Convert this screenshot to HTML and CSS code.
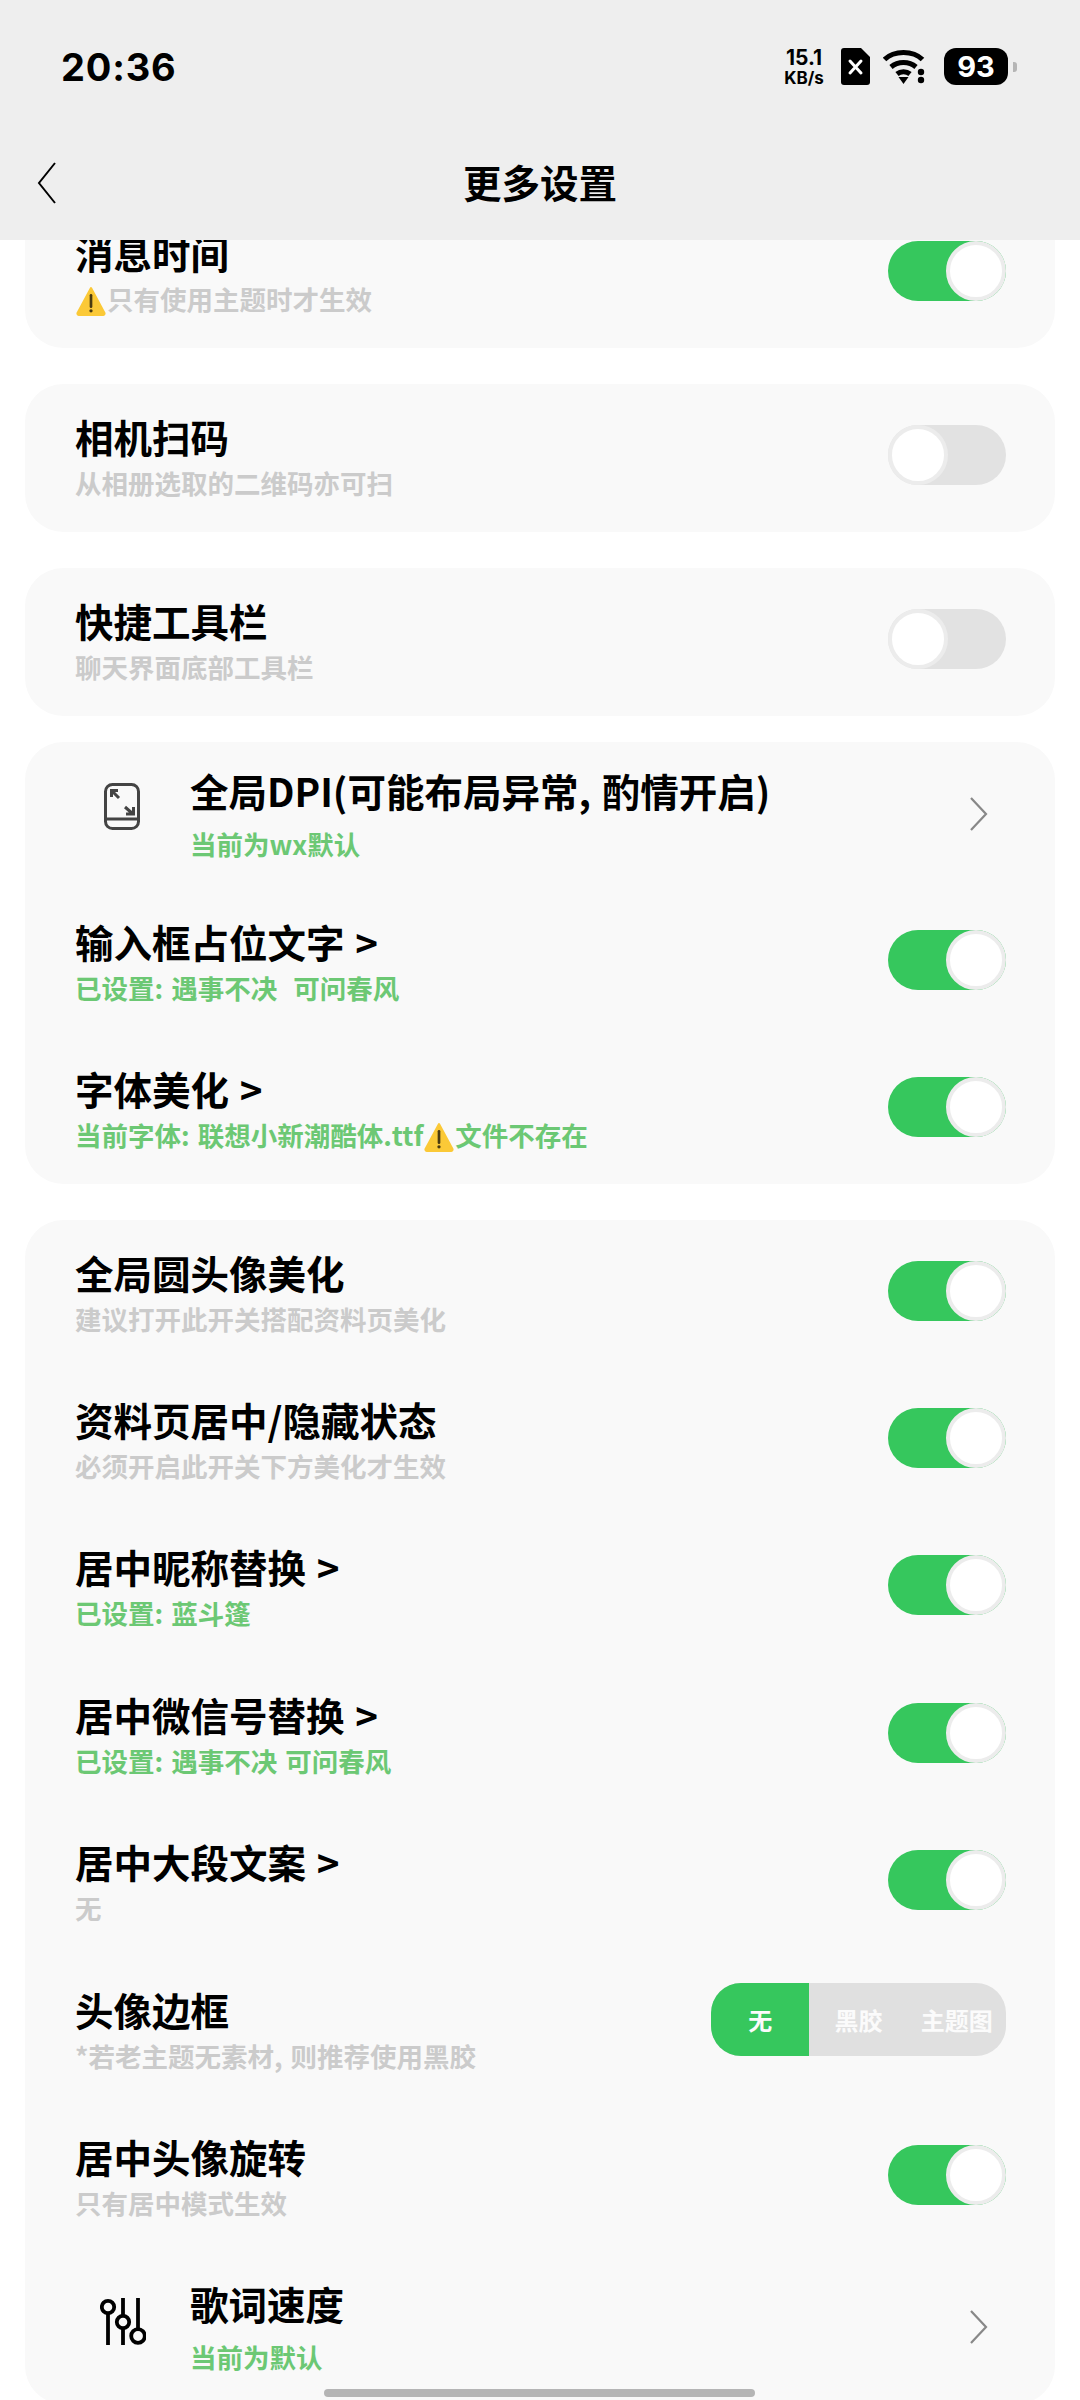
FILE: index.html
```html
<!DOCTYPE html>
<html lang="zh-CN">
<head>
<meta charset="utf-8">
<title>更多设置</title>
<link rel="stylesheet" href="styles.css">
</head>
<body>
<div class="phone">
  <header class="appbar">
    <div class="status">
      <span class="time">20:36</span>
      <div class="status-icons">
        <div class="speed"><span class="speed-num">15.1</span><span class="speed-unit">KB/s</span></div>
        <svg class="sim" width="29" height="37" viewBox="0 0 29 37"><path d="M3 0H20L29 9V34a3 3 0 0 1-3 3H3a3 3 0 0 1-3-3V3a3 3 0 0 1 3-3Z" fill="#000"/><path d="M9 13L20 25M20 13L9 25" stroke="#fff" stroke-width="3" stroke-linecap="round"/></svg>
        <svg class="wifi" width="42" height="35" viewBox="0 0 42 35"><g fill="none" stroke="#000" stroke-width="5"><path d="M1.500 10.500C11 1 30 1 39.500 10.500"/><path d="M8 18C15 12 26 12 33 18"/><path d="M14 25C17.500 22 23.500 22 27 25"/></g><path d="M15.500 28H25.500L20.500 35Z" fill="#000"/><circle cx="38" cy="23" r="3.200" fill="#000"/><circle cx="38" cy="31" r="3.200" fill="#000"/></svg>
        <div class="battery"><span class="battery-body">93</span><span class="battery-tip"></span></div>
      </div>
    </div>
    <div class="nav">
      <svg class="back" width="20" height="42" viewBox="0 0 20 42"><path d="M18 1L2 21L18 41" fill="none" stroke="#000" stroke-width="2"/></svg>
      <h1 class="page-title">更多设置</h1>
    </div>
  </header>

  <main class="content">
    <section class="card card-first">
      <div class="row row-lead">
        <div class="text">
          <div class="title">消息时间</div>
          <div class="sub muted"><svg class="warn" width="32" height="30" viewBox="0 0 30 29"><path d="M15 2L28 26a1.500 1.500 0 0 1-1.500 2H3.500A1.500 1.500 0 0 1 2 26Z" fill="#fbc937" stroke="#fbc937" stroke-width="2" stroke-linejoin="round"/><path d="M15 9V20" stroke="#4a3a10" stroke-width="2.600" stroke-linecap="round"/><circle cx="15" cy="24" r="1.600" fill="#4a3a10"/></svg>只有使用主题时才生效</div>
        </div>
        <span class="toggle on"></span>
      </div>
    </section>

    <section class="card gap-36">
      <div class="row row-solo">
        <div class="text">
          <div class="title">相机扫码</div>
          <div class="sub muted">从相册选取的二维码亦可扫</div>
        </div>
        <span class="toggle"></span>
      </div>
    </section>

    <section class="card gap-36">
      <div class="row row-solo">
        <div class="text">
          <div class="title">快捷工具栏</div>
          <div class="sub muted">聊天界面底部工具栏</div>
        </div>
        <span class="toggle"></span>
      </div>
    </section>

    <section class="card card-group gap-26">
      <div class="row row-icon">
        <span class="row-glyph glyph-dpi">
          <svg width="36" height="47" viewBox="0 0 36 47"><g fill="none" stroke="#444" stroke-width="3"><rect x="1.500" y="1.500" width="33" height="44" rx="7"/><path d="M1.500 36H34.500"/><path d="M8 8L15 15M7.500 14V7.500H14"/><path d="M21 24L29 31M22 31H29.500V24"/></g></svg>
        </span>
        <div class="text text-wide">
          <div class="title">全局DPI(可能布局异常, 酌情开启)</div>
          <div class="sub green">当前为wx默认</div>
        </div>
        <svg class="chevron" width="20" height="34" viewBox="0 0 20 34"><path d="M2 1L17 17L2 33" fill="none" stroke="#888" stroke-width="2.200"/></svg>
      </div>
      <div class="row">
        <div class="text">
          <div class="title">输入框占位文字 &gt;</div>
          <div class="sub green pre">已设置: 遇事不决  可问春风</div>
        </div>
        <span class="toggle on"></span>
      </div>
      <div class="row">
        <div class="text">
          <div class="title">字体美化 &gt;</div>
          <div class="sub green">当前字体: 联想小新潮酷体.ttf<svg class="warn" width="32" height="30" viewBox="0 0 30 29"><path d="M15 2L28 26a1.500 1.500 0 0 1-1.500 2H3.500A1.500 1.500 0 0 1 2 26Z" fill="#fbc937" stroke="#fbc937" stroke-width="2" stroke-linejoin="round"/><path d="M15 9V20" stroke="#4a3a10" stroke-width="2.600" stroke-linecap="round"/><circle cx="15" cy="24" r="1.600" fill="#4a3a10"/></svg>文件不存在</div>
        </div>
        <span class="toggle on"></span>
      </div>
    </section>

    <section class="card card-long gap-36">
      <div class="row">
        <div class="text">
          <div class="title">全局圆头像美化</div>
          <div class="sub muted">建议打开此开关搭配资料页美化</div>
        </div>
        <span class="toggle on"></span>
      </div>
      <div class="row">
        <div class="text">
          <div class="title">资料页居中/隐藏状态</div>
          <div class="sub muted">必须开启此开关下方美化才生效</div>
        </div>
        <span class="toggle on"></span>
      </div>
      <div class="row">
        <div class="text">
          <div class="title">居中昵称替换 &gt;</div>
          <div class="sub green">已设置: 蓝斗篷</div>
        </div>
        <span class="toggle on"></span>
      </div>
      <div class="row">
        <div class="text">
          <div class="title">居中微信号替换 &gt;</div>
          <div class="sub green">已设置: 遇事不决 可问春风</div>
        </div>
        <span class="toggle on"></span>
      </div>
      <div class="row">
        <div class="text">
          <div class="title">居中大段文案 &gt;</div>
          <div class="sub muted">无</div>
        </div>
        <span class="toggle on"></span>
      </div>
      <div class="row">
        <div class="text">
          <div class="title">头像边框</div>
          <div class="sub muted">*若老主题无素材, 则推荐使用黑胶</div>
        </div>
        <div class="segment">
          <span class="seg seg-active">无</span>
          <span class="seg">黑胶</span>
          <span class="seg">主题图</span>
        </div>
      </div>
      <div class="row">
        <div class="text">
          <div class="title">居中头像旋转</div>
          <div class="sub muted">只有居中模式生效</div>
        </div>
        <span class="toggle on"></span>
      </div>
      <div class="row row-icon row-last">
        <span class="row-glyph glyph-sliders">
          <svg width="46" height="48" viewBox="0 0 46 48"><g fill="none" stroke="#000" stroke-width="3.800"><circle cx="8" cy="9" r="6.200"/><path d="M8 15V47"/><path d="M23 0V17M23 30V47"/><circle cx="23" cy="24" r="6.200"/><path d="M38 0V31"/><circle cx="38" cy="38" r="6.800"/></g></svg>
        </span>
        <div class="text text-wide">
          <div class="title">歌词速度</div>
          <div class="sub green">当前为默认</div>
        </div>
        <svg class="chevron" width="20" height="34" viewBox="0 0 20 34"><path d="M2 1L17 17L2 33" fill="none" stroke="#888" stroke-width="2.200"/></svg>
      </div>
    </section>
  </main>

  <div class="home-bar"></div>
</div>
</body>
</html>
```

FILE: styles.css
```css
*, *::before, *::after { box-sizing: border-box; }

html, body {
  margin: 0;
  padding: 0;
  background: #fff;
}

.phone {
  position: relative;
  width: 1080px;
  height: 2400px;
  overflow: hidden;
  display: flex;
  flex-direction: column;
  background: #fff;
  color: #000;
  font-family: "Noto Sans CJK SC", "Noto Sans", sans-serif;
}

.appbar {
  position: relative;
  z-index: 2;
  flex: none;
  height: 240px;
  background: #eeeeee;
}

.status {
  height: 134px;
  padding: 46px 63px 0 61px;
  display: flex;
  justify-content: space-between;
  align-items: flex-start;
}

.time {
  font-family: Inter, "Liberation Sans", sans-serif;
  font-weight: 700;
  font-size: 38px;
  line-height: 42px;
  letter-spacing: 0.8px;
}

.status-icons {
  display: flex;
  align-items: flex-start;
  padding-top: 2px;
}

.speed {
  width: 44px;
  margin-right: 15px;
  display: flex;
  flex-direction: column;
  align-items: center;
  font-family: Inter, "Liberation Sans", sans-serif;
  font-weight: 700;
  color: #000;
}

.speed-num { font-size: 21px; line-height: 20px; }
.speed-unit { font-size: 17px; line-height: 20px; }

.sim { margin-right: 13px; }
.wifi { margin-right: 19px; margin-top: 1px; }

.battery {
  display: flex;
  align-items: center;
}

.battery-body {
  width: 64px;
  height: 37px;
  border-radius: 12px;
  background: #000;
  color: #fff;
  font-family: Inter, "Liberation Sans", sans-serif;
  font-weight: 700;
  font-size: 29px;
  line-height: 37px;
  text-align: center;
}

.battery-tip {
  width: 4px;
  height: 10px;
  margin-left: 5px;
  border-radius: 0 3px 3px 0;
  background: #b5b5b5;
}

.nav {
  height: 106px;
  position: relative;
  display: flex;
  align-items: center;
  justify-content: center;
  padding-bottom: 12px;
}

.back {
  position: absolute;
  left: 37px;
  top: 28px;
}

.page-title {
  margin: 0;
  font-size: 38.5px;
  line-height: 50px;
  font-weight: 700;
}

.content {
  flex: 1;
  min-height: 0;
  padding: 0 25px;
}

.card {
  background: #f9f9f9;
  border-radius: 38px;
}

.card-first { margin-top: -41px; }
.card-group { padding-bottom: 1px; }
.gap-36 { margin-top: 36px; }
.gap-26 { margin-top: 26px; }

.row {
  height: 147px;
  padding: 0 49px 4px 50px;
  display: flex;
  align-items: center;
  justify-content: space-between;
}

.row-lead { height: 149px; }
.row-solo { height: 148px; }
.card-long .row { height: 147.4px; }
.card-long .row-last { height: 152px; padding-top: 2px; }

.text { min-width: 0; }

.title {
  font-size: 38.5px;
  line-height: 50px;
  font-weight: 700;
  color: #000;
  white-space: nowrap;
  word-spacing: 2px;
}

.sub {
  margin-top: 4px;
  font-size: 26.500px;
  line-height: 36px;
  font-weight: 700;
  white-space: nowrap;
  word-spacing: 2px;
}

.pre { white-space: pre; }

.muted { color: #cbcbcb; }
.green { color: #6cc874; }

.warn {
  display: inline-block;
  vertical-align: -6px;
}

.toggle {
  flex: none;
  width: 118px;
  height: 60px;
  margin-bottom: 2px;
  border-radius: 30px;
  background: #e2e2e2;
  display: flex;
  justify-content: flex-start;
}

.toggle::after {
  content: "";
  width: 60px;
  height: 60px;
  border-radius: 50%;
  background: #fff;
  border: 4.500px solid #ececec;
}

.toggle.on {
  background: #36c75d;
  justify-content: flex-end;
}

.segment {
  flex: none;
  width: 295px;
  height: 73px;
  margin-bottom: 19px;
  border-radius: 30px;
  overflow: hidden;
  background: #e0e0e0;
  display: grid;
  grid-template-columns: repeat(3, 1fr);
}

.seg {
  display: flex;
  align-items: center;
  justify-content: center;
  color: #fbfbfb;
  font-size: 24px;
  font-weight: 700;
}

.seg-active { background: #36c75d; }

.row-icon { justify-content: flex-start; padding-right: 66px; }

.row-glyph {
  flex: none;
  width: 115px;
  display: flex;
  align-items: center;
}

.glyph-dpi { padding-left: 29px; margin-bottom: 14px; }
.glyph-sliders { padding-left: 25px; margin-bottom: 10px; }

.text-wide { flex: 1; }
.text-wide .sub { margin-top: 11px; }

.chevron { flex: none; }

.home-bar {
  position: absolute;
  left: 324px;
  bottom: 3px;
  width: 431px;
  height: 8px;
  border-radius: 4px;
  background: #b5b5b5;
  z-index: 3;
}
```
